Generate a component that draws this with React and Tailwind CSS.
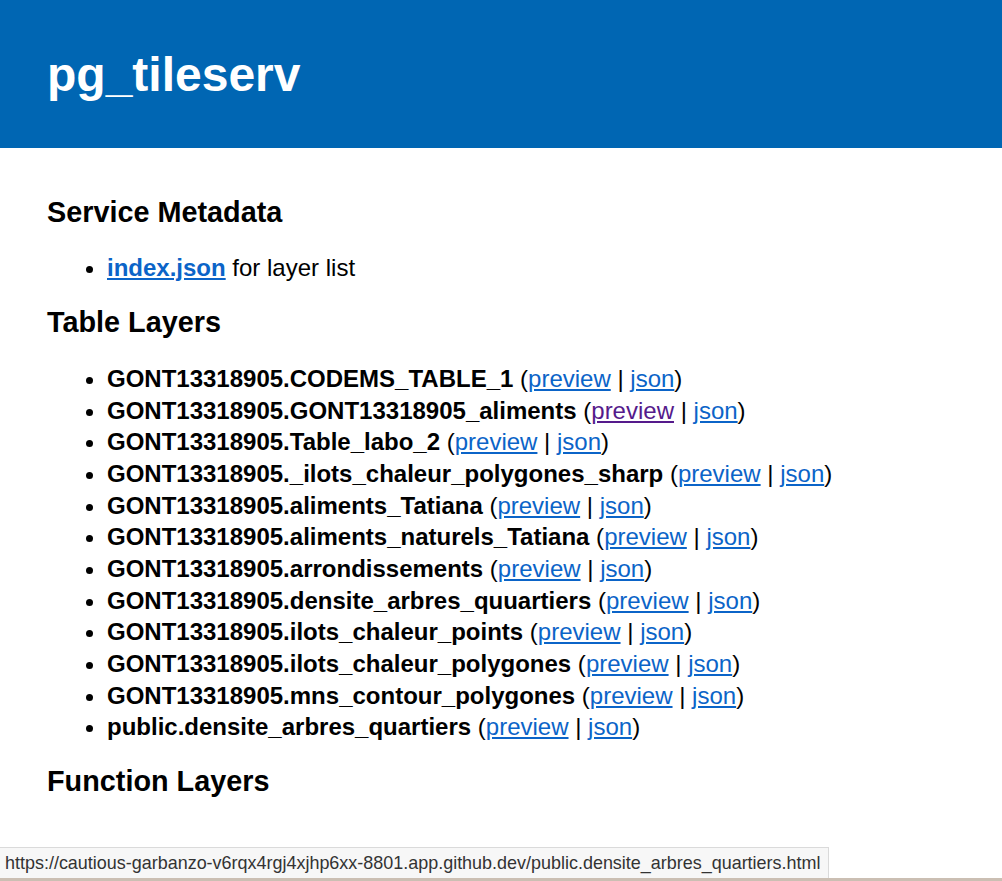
import React from "react";

const layers = [
  { name: "GONT13318905.CODEMS_TABLE_1" },
  { name: "GONT13318905.GONT13318905_aliments", visited: true },
  { name: "GONT13318905.Table_labo_2" },
  { name: "GONT13318905._ilots_chaleur_polygones_sharp" },
  { name: "GONT13318905.aliments_Tatiana" },
  { name: "GONT13318905.aliments_naturels_Tatiana" },
  { name: "GONT13318905.arrondissements" },
  { name: "GONT13318905.densite_arbres_quuartiers" },
  { name: "GONT13318905.ilots_chaleur_points" },
  { name: "GONT13318905.ilots_chaleur_polygones" },
  { name: "GONT13318905.mns_contour_polygones" },
  { name: "public.densite_arbres_quartiers" },
];

const Heading = ({ children, className }) => (
  <h3 className={`text-[28.8px] leading-[33px] font-bold text-black ${className}`}>
    {children}
  </h3>
);

const App = () => {
  return (
    <div className="relative h-[881px] w-full overflow-hidden bg-white font-['Liberation_Sans',Arial,sans-serif] text-black">
      {/* header */}
      <div className="h-[148px] bg-[#0066b3] flex items-center pl-[47px]">
        <h1 className="text-[48px] leading-[55px] font-bold text-white">pg_tileserv</h1>
      </div>

      <div className="pl-[47px]">
        <Heading className="mt-[48px]">Service Metadata</Heading>
        <ul className="mt-[23px] pl-[60px] list-disc text-[24px] leading-[31.7px]">
          <li>
            <a href="#" className="font-bold text-[#0b64c8] underline">index.json</a> for layer list
          </li>
        </ul>

        <Heading className="mt-[22px]">Table Layers</Heading>
        <ul className="mt-[24.5px] pl-[60px] list-disc text-[24px] leading-[31.64px]">
          {layers.map((layer) => (
            <li key={layer.name}>
              <span className="font-bold">{layer.name}</span> (
              <a
                href="#"
                className={`underline ${layer.visited ? "text-[#551a8b]" : "text-[#0b64c8]"}`}
              >
                preview
              </a>{" "}
              |{" "}
              <a href="#" className="underline text-[#0b64c8]">json</a>)
            </li>
          ))}
        </ul>

        <Heading className="mt-[21.7px]">Function Layers</Heading>
      </div>

      {/* link status bubble */}
      <div className="absolute left-0 top-[847px] w-[829px] h-[31px] bg-[#f7f7f7] border-t border-r border-[#dadada] flex items-center pl-[5px] overflow-hidden">
        <span className="whitespace-nowrap text-[19px] origin-left scale-x-[0.945] text-[#333333] font-['Liberation_Sans',Arial,sans-serif]">
          https://cautious-garbanzo-v6rqx4rgj4xjhp6xx-8801.app.github.dev/public.densite_arbres_quartiers.html
        </span>
      </div>
      <div className="absolute left-0 top-[878px] w-full h-[3px] bg-[#cbbfb3]" />
    </div>
  );
};

export default App;
